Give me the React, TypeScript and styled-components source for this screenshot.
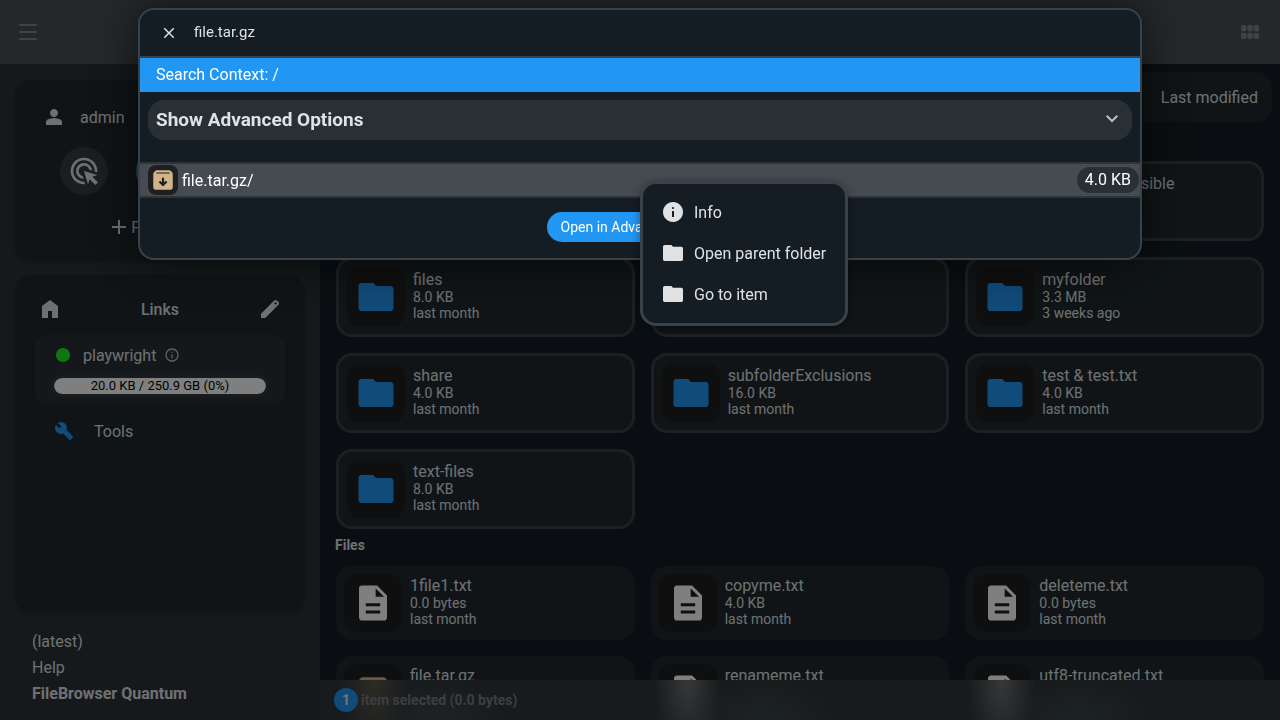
import React from "react";
import styled, { createGlobalStyle } from "styled-components";

const GlobalStyle = createGlobalStyle`
  * { box-sizing: border-box; }
  body {
    margin: 0;
    background: #141d24;
    color: #dfe1e3;
    font-family: Roboto, "Liberation Sans", sans-serif;
    font-size: 16px;
  }
  button, input { font: inherit; color: inherit; }
  button { border: 0; background: none; padding: 0; cursor: pointer; }
  a { color: inherit; text-decoration: none; }
  h2, p, ul { margin: 0; padding: 0; list-style: none; }
`;

const paths = {
  person:
    "M480-480q-66 0-113-47t-47-113q0-66 47-113t113-47q66 0 113 47t47 113q0 66-47 113t-113 47ZM160-160v-112q0-34 17.5-62.5T224-378q62-31 126-46.5T480-440q66 0 130 15.5T736-378q29 15 46.5 43.5T800-272v112H160Z",
  home: "M160-120v-480l320-240 320 240v480H560v-280H400v280H160Z",
  edit:
    "M120-120v-170l528-527q12-11 26.5-17t30.5-6q16 0 31 6t26 18l55 56q12 11 17.5 26t5.5 30q0 16-5.5 30.5T817-647L290-120H120Zm584-528 56-56-56-56-56 56 56 56Z",
  info:
    "M440-280h80v-240h-80v240Zm40-320q17 0 28.5-11.5T520-640q0-17-11.5-28.5T480-680q-17 0-28.5 11.5T440-640q0 17 11.5 28.5T480-600Zm0 520q-83 0-156-31.5T197-197q-54-54-85.5-127T80-480q0-83 31.5-156T197-763q54-54 127-85.5T480-880q83 0 156 31.5T763-763q54 54 85.5 127T880-480q0 83-31.5 156T763-197q-54 54-127 85.5T480-80Z",
  infoOutline:
    "M440-280h80v-240h-80v240Zm40-320q17 0 28.5-11.5T520-640q0-17-11.5-28.5T480-680q-17 0-28.5 11.5T440-640q0 17 11.5 28.5T480-600Zm0 520q-83 0-156-31.5T197-197q-54-54-85.5-127T80-480q0-83 31.5-156T197-763q54-54 127-85.5T480-880q83 0 156 31.5T763-763q54 54 85.5 127T880-480q0 83-31.5 156T763-197q-54 54-127 85.5T480-80Zm0-80q134 0 227-93t93-227q0-134-93-227t-227-93q-134 0-227 93t-93 227q0 134 93 227t227 93Z",
  folder:
    "M146.67-160q-27 0-46.84-19.83Q80-199.67 80-226.67v-506.66q0-27 19.83-46.84Q119.67-800 146.67-800H414l66.67 66.67h332.66q27 0 46.84 19.83Q880-693.67 880-666.67v440q0 27-19.83 46.84Q840.33-160 813.33-160H146.67Z",
  description:
    "M315.33-240h329.34v-66.67H315.33V-240Zm0-166.67h329.34v-66.66H315.33v66.66ZM226.67-80q-27.5 0-47.09-19.58Q160-119.17 160-146.67v-666.66q0-27.5 19.58-47.09Q199.17-880 226.67-880H574l226 226v507.33q0 27.5-19.58 47.09Q760.83-80 733.33-80H226.67Zm314-542.67h192.66L540.67-813.33v190.66Z",
  archive:
    "m480-240 160-160-56-56-64 64v-168h-80v168l-64-64-56 56 160 160ZM200-120q-33 0-56.5-23.5T120-200v-499q0-14 4.5-27t13.5-24l50-61q11-14 27.5-21.5T250-840h460q18 0 34.5 7.5T772-811l50 61q9 11 13.5 24t4.5 27v499q0 33-23.5 56.5T760-120H200Zm16-600h528l-34-40H250l-34 40Z",
  build:
    "M686-132 444-376q-20 8-40.5 12t-43.5 4q-100 0-170-70t-70-170q0-36 10-68.5t28-61.5l146 146 72-72-146-146q29-18 61.5-28t68.5-10q100 0 170 70t70 170q0 23-4 43.5T584-516l244 242q12 12 12 29t-12 29l-84 84q-12 12-29 12t-29-12Z",
  adsClick:
    "M468-240q-96-5-162-74t-66-166q0-100 70-170t170-70q97 0 166 66t74 162l-84-25q-13-54-56-88.5T480-640q-66 0-113 47t-47 113q0 57 34.5 100t88.5 56l25 84Zm48 158q-9 2-18 2h-18q-83 0-156-31.5T197-197q-54-54-85.5-127T80-480q0-83 31.5-156T197-763q54-54 127-85.5T480-880q83 0 156 31.5T763-763q54 54 85.5 127T880-480v18q0 9-2 18l-78-24v-12q0-134-93-227t-227-93q-134 0-227 93t-93 227q0 134 93 227t227 93h12l24 78Zm305 22L650-231 600-80 480-480l400 120-151 50 171 171-79 79Z",
  close:
    "m256-200-56-56 224-224-224-224 56-56 224 224 224-224 56 56-224 224 224 224-56 56-224-224-224 224Z",
  expandMore: "M480-344 240-584l56-56 184 184 184-184 56 56-240 240Z",
  add: "M440-440H200v-80h240v-240h80v240h240v80H520v240h-80v-240Z",
};

type IconName = keyof typeof paths;

const Svg = styled.svg`
  display: block;
  flex: none;
  fill: currentColor;
`;

function Icon({ name, size = 24 }: { name: IconName; size?: number }) {
  return (
    <Svg width={size} height={size} viewBox="0 -960 960 960" aria-hidden="true">
      <path d={paths[name]} />
    </Svg>
  );
}

const Page = styled.div`
  display: flex;
  flex-direction: column;
  height: 100vh;
  overflow: hidden;
`;

const TopBar = styled.header`
  flex: none;
  display: flex;
  align-items: center;
  justify-content: space-between;
  height: 64px;
  padding: 0 18px;
  background: #485156;
  color: #788792;
`;

const Body = styled.div`
  flex: 1;
  display: flex;
  min-height: 0;
`;

const Sidebar = styled.aside`
  flex: none;
  display: flex;
  flex-direction: column;
  gap: 14px;
  width: 320px;
  padding: 16px 15px 13px;
  background: #2a3236;
`;

const Panel = styled.section<{ $grow?: boolean }>`
  flex: ${(p) => (p.$grow ? 1 : "none")};
  padding: 20px;
  border-radius: 16px;
  background: #20282c;
  box-shadow: 0 2px 3px rgba(0, 0, 0, 0.15);
`;

const UserRow = styled.div`
  display: flex;
  align-items: center;
  gap: 14px;
  height: 34px;
  padding: 0 7px;
`;

const RoundRow = styled.div`
  display: flex;
  justify-content: center;
  gap: 28px;
  margin: 13px 0 18px;
`;

const RoundButton = styled.button<{ $active?: boolean }>`
  display: grid;
  place-items: center;
  width: 48px;
  height: 48px;
  border-radius: 50%;
  background: ${(p) => (p.$active ? "#2196f3" : "#363b3f")};
`;

const ActionsButton = styled.button`
  display: flex;
  align-items: center;
  height: 28px;
  margin: 0 auto;
`;

const LinksHeader = styled.div`
  display: flex;
  align-items: center;
  justify-content: space-between;
  height: 28px;
  padding: 0 3px;
  margin-bottom: 12px;
`;

const LinksTitle = styled.h2`
  font-size: 16px;
  font-weight: 500;
`;

const Source = styled.div`
  height: 70px;
  padding: 0 16px;
  border-radius: 12px;
  background: #293136;
`;

const SourceName = styled.a`
  display: flex;
  align-items: center;
  height: 40px;
  padding-left: 5px;
`;

const Dot = styled.span`
  width: 14px;
  height: 14px;
  margin-right: 13px;
  border-radius: 50%;
  background: #1cf01c;
`;

const Hint = styled.span`
  margin-left: 8px;
  opacity: 0.8;
`;

const Usage = styled.div`
  height: 22px;
  border: 3px solid #30383c;
  border-radius: 11px;
  background: #fff;
  background-clip: padding-box;
  color: #000;
  font-size: 13px;
  line-height: 16px;
  text-align: center;
`;

const ToolsLink = styled.a`
  display: flex;
  align-items: center;
  gap: 18px;
  height: 36px;
  margin-top: 8px;
  padding-left: 17px;

  svg { color: #2196f3; }
`;

const Credits = styled.footer`
  display: flex;
  flex-direction: column;
  padding: 4px 17px 0;
  line-height: 26px;
`;

const Main = styled.main`
  flex: 1;
  display: flex;
  flex-direction: column;
  min-width: 0;
`;

const Listing = styled.div`
  flex: 1;
  min-height: 0;
  overflow: hidden;
`;

const SortBar = styled.div`
  display: flex;
  align-items: center;
  gap: 40px;
  height: 50px;
  margin: 8px 8px 2px;
  padding: 0 14px;
  border-radius: 16px;
  background: #20282c;

  button:first-child { margin-right: auto; }
`;

const GroupTitle = styled.h2`
  padding-left: 15px;
  font-size: 14px;
  font-weight: 700;
  line-height: 33px;
  height: 37px;
`;

const Grid = styled.ul`
  display: grid;
  grid-template-columns: repeat(3, 1fr);
  gap: 16px;
  padding: 0 16px;
`;

const Item = styled.li<{ $bordered?: boolean }>`
  display: flex;
  align-items: center;
  gap: 8px;
  padding: 8px;
  border: ${(p) => (p.$bordered ? "3px solid #3a4147" : "0")};
  border-radius: 16px;
  background: #20292d;
`;

const tints = { folder: "#2196f3", description: "#fff", archive: "#d2b48c" };
type Kind = keyof typeof tints;

const Thumb = styled.span<{ $kind: Kind; $small?: boolean }>`
  display: grid;
  place-items: center;
  flex: none;
  width: ${(p) => (p.$small ? 30 : 58)}px;
  height: ${(p) => (p.$small ? 30 : 58)}px;
  border-radius: ${(p) => (p.$small ? 8 : 12)}px;
  background: #1f1f1f;
  color: ${(p) => tints[p.$kind]};
`;

const ItemText = styled.div`
  min-width: 0;
  padding-bottom: 2px;
  font-size: 14px;
  line-height: 16px;
  white-space: nowrap;
`;

const ItemName = styled.p`
  font-size: 16px;
  line-height: 18px;
`;

const StatusBar = styled.div`
  flex: none;
  display: flex;
  align-items: center;
  gap: 3px;
  height: 40px;
  padding: 0 14px;
  background:
    radial-gradient(34px 70px at 5.6% 0, rgba(140, 118, 90, 0.5), transparent),
    radial-gradient(34px 80px at 38.3% 0, rgba(150, 150, 150, 0.6), transparent),
    radial-gradient(34px 80px at 71% 0, rgba(150, 150, 150, 0.6), transparent),
    radial-gradient(70px 40px at 12% 100%, rgba(90, 104, 112, 0.3), transparent),
    radial-gradient(70px 40px at 46% 100%, rgba(90, 104, 112, 0.3), transparent),
    radial-gradient(70px 40px at 79% 100%, rgba(90, 104, 112, 0.3), transparent),
    #2f373a;
  color: #797d80;
  font-size: 14px;
  font-weight: 700;
`;

const Count = styled.span`
  display: grid;
  place-items: center;
  width: 24px;
  height: 24px;
  border-radius: 50%;
  background: #2196f3;
  color: #e6e8ea;
`;

const Overlay = styled.div`
  position: fixed;
  inset: 0;
  display: flex;
  justify-content: center;
  align-items: flex-start;
  padding: 8px 8px 0;
  background: rgba(0, 0, 0, 0.5);
`;

const Dialog = styled.div`
  width: 100%;
  max-width: 1004px;
  overflow: hidden;
  border: 2px solid #3a4147;
  border-radius: 16px;
  background: #141d24;
  box-shadow: 0 0 48px rgba(0, 0, 0, 0.6);
`;

const SearchRow = styled.div`
  display: flex;
  align-items: center;
  gap: 16px;
  height: 48px;
  padding: 0 20px;
  border-bottom: 2px solid #3a4147;
`;

const SearchInput = styled.input`
  flex: 1;
  height: 30px;
  padding: 0 0 2px;
  border: 0;
  outline: 0;
  background: none;
  font-size: 15px;
`;

const ContextBar = styled.div`
  padding: 0 16px;
  background: #2196f3;
  color: #fff;
  line-height: 34px;
`;

const OptionsToggle = styled.button`
  display: flex;
  align-items: center;
  justify-content: space-between;
  width: calc(100% - 16px);
  height: 40px;
  margin: 8px 8px 22px;
  padding: 0 8px 2px;
  border-radius: 16px;
  background: #283036;
  font-size: 19px;
  font-weight: 700;

  svg { color: #b9bdc1; }
`;

const Result = styled.a`
  display: flex;
  align-items: center;
  gap: 4px;
  height: 36px;
  padding: 0 1px 0 8px;
  border: solid #2d353b;
  border-width: 2px 0;
  background: #454b51;
  color: #fff;
`;

const SizeBadge = styled.span`
  margin-left: auto;
  padding: 0 8px;
  border-radius: 13px;
  background: #283036;
  line-height: 26px;
`;

const DialogFooter = styled.div`
  display: flex;
  justify-content: center;
  padding: 14px 0 16px;
`;

const PrimaryButton = styled.button`
  height: 30px;
  padding: 0 14px;
  border-radius: 16px;
  background: #2196f3;
  color: #fff;
  font-size: 14px;
`;

const Menu = styled.ul`
  position: fixed;
  top: 181px;
  left: 640px;
  padding: 8px 0;
  border: 3px solid #3a4147;
  border-radius: 16px;
  background: #141d24;
  box-shadow: 0 2px 8px rgba(0, 0, 0, 0.4);
`;

const MenuButton = styled.button`
  display: flex;
  align-items: center;
  gap: 9px;
  height: 41px;
  padding: 0 19px 1px 18px;
`;

type Entry = { name: string; size: string; date: string; kind: Kind };

const entry = (name: string, size: string, kind: Kind, date = "last month"): Entry => ({ name, size, date, kind });

const folders = [
  entry("denied", "4.0 KB", "folder"),
  entry("excluded", "4.0 KB", "folder"),
  entry("excludedbutvisible", "4.0 KB", "folder"),
  entry("files", "8.0 KB", "folder"),
  entry("folder", "4.0 KB", "folder"),
  entry("myfolder", "3.3 MB", "folder", "3 weeks ago"),
  entry("share", "4.0 KB", "folder"),
  entry("subfolderExclusions", "16.0 KB", "folder"),
  entry("test & test.txt", "4.0 KB", "folder"),
  entry("text-files", "8.0 KB", "folder"),
];

const files = [
  entry("1file1.txt", "0.0 bytes", "description"),
  entry("copyme.txt", "4.0 KB", "description"),
  entry("deleteme.txt", "0.0 bytes", "description"),
  entry("file.tar.gz", "4.0 KB", "archive"),
  entry("renameme.txt", "4.0 KB", "description"),
  entry("utf8-truncated.txt", "4.0 KB", "description"),
];

function Entries({ items, bordered }: { items: Entry[]; bordered?: boolean }) {
  return (
    <Grid>
      {items.map((it) => (
        <Item key={it.name} $bordered={bordered}>
          <Thumb $kind={it.kind}>
            <Icon name={it.kind} size={42} />
          </Thumb>
          <ItemText>
            <ItemName>{it.name}</ItemName>
            <p>{it.size}</p>
            <p>{it.date}</p>
          </ItemText>
        </Item>
      ))}
    </Grid>
  );
}

const menuItems: { icon: IconName; label: string }[] = [
  { icon: "info", label: "Info" },
  { icon: "folder", label: "Open parent folder" },
  { icon: "folder", label: "Go to item" },
];

export default function App() {
  return (
    <>
      <GlobalStyle />
      <Page>
        <TopBar>
          <button aria-label="Toggle sidebar">
            <Svg width="20" height="20" viewBox="0 0 20 20" aria-hidden="true">
              <rect x="1" y="2" width="18" height="2" rx="1" />
              <rect x="1" y="9" width="18" height="2" rx="1" />
              <rect x="1" y="16" width="18" height="2" rx="1" />
            </Svg>
          </button>
          <button aria-label="Switch view">
            <Svg width="24" height="24" viewBox="0 0 24 24" aria-hidden="true">
              {[3, 9.3, 15.6].map((x) =>
                [5, 12.7].map((y) => <rect key={`${x}-${y}`} x={x} y={y} width="5.5" height="6.4" rx="1.8" />)
              )}
            </Svg>
          </button>
        </TopBar>
        <Body>
          <Sidebar>
            <Panel>
              <UserRow>
                <Icon name="person" />
                admin
              </UserRow>
              <RoundRow>
                <RoundButton aria-label="Single click">
                  <Icon name="adsClick" size={32} />
                </RoundButton>
                <RoundButton $active aria-label="Dark mode" />
                <RoundButton aria-label="Help tips" />
              </RoundRow>
              <ActionsButton>
                <Icon name="add" />
                File actions
              </ActionsButton>
            </Panel>
            <Panel $grow>
              <LinksHeader>
                <button aria-label="Home">
                  <Icon name="home" />
                </button>
                <LinksTitle>Links</LinksTitle>
                <button aria-label="Edit links">
                  <Icon name="edit" />
                </button>
              </LinksHeader>
              <Source>
                <SourceName href="#playwright">
                  <Dot />
                  playwright
                  <Hint>
                    <Icon name="infoOutline" size={16} />
                  </Hint>
                </SourceName>
                <Usage>20.0 KB / 250.9 GB (0%)</Usage>
              </Source>
              <ToolsLink href="#tools">
                <Icon name="build" />
                Tools
              </ToolsLink>
            </Panel>
            <Credits>
              <a href="#latest">(latest)</a>
              <a href="#help">Help</a>
              <strong>FileBrowser Quantum</strong>
            </Credits>
          </Sidebar>
          <Main>
            <Listing>
              <SortBar>
                <button>Name</button>
                <button>Size</button>
                <button>Last modified</button>
              </SortBar>
              <GroupTitle>Folders</GroupTitle>
              <Entries items={folders} bordered />
              <GroupTitle>Files</GroupTitle>
              <Entries items={files} />
            </Listing>
            <StatusBar>
              <Count>1</Count>
              item selected (0.0 bytes)
            </StatusBar>
          </Main>
        </Body>
      </Page>
      <Overlay>
        <Dialog role="dialog" aria-label="Search">
          <SearchRow>
            <button aria-label="Close search">
              <Icon name="close" size={18} />
            </button>
            <SearchInput aria-label="Search" defaultValue="file.tar.gz" />
          </SearchRow>
          <ContextBar>Search Context: /</ContextBar>
          <OptionsToggle>
            Show Advanced Options
            <Icon name="expandMore" />
          </OptionsToggle>
          <Result href="#file.tar.gz">
            <Thumb $kind="archive" $small>
              <Icon name="archive" size={26} />
            </Thumb>
            file.tar.gz/
            <SizeBadge>4.0 KB</SizeBadge>
          </Result>
          <DialogFooter>
            <PrimaryButton>Open in Advanced Search</PrimaryButton>
          </DialogFooter>
        </Dialog>
        <Menu>
          {menuItems.map((m) => (
            <li key={m.label}>
              <MenuButton>
                <Icon name={m.icon} />
                {m.label}
              </MenuButton>
            </li>
          ))}
        </Menu>
      </Overlay>
    </>
  );
}
